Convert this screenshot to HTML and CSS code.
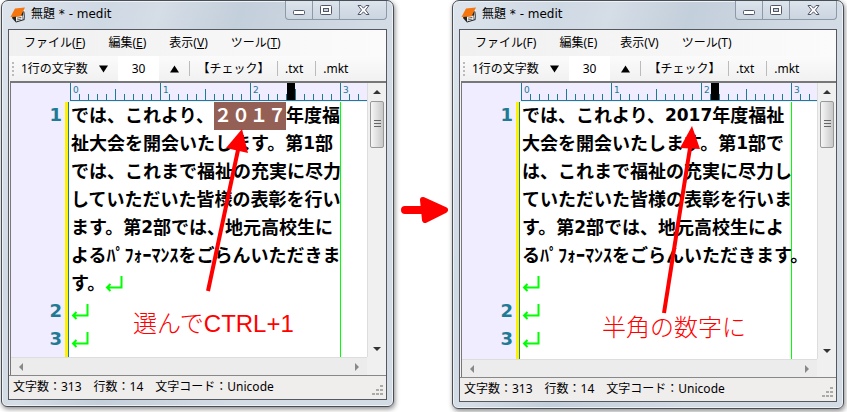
FILE: index.html
```html
<!DOCTYPE html>
<html lang="ja">
<head>
<meta charset="utf-8">
<title>medit</title>
<link rel="stylesheet" href="styles.css">
</head>
<body>
<svg class="defs" aria-hidden="true">
  <symbol id="book" viewBox="0 0 16 16">
    <path d="M5 3L15 4.500L14.500 13L6 15.500L2 11Z" fill="#222"/>
    <path d="M6 9.500L12.500 8.500L12.500 12.500L6 14.500Z" fill="#fff"/>
    <path d="M7 11.200L11.500 10.300M6.700 13L11.200 12" stroke="#444" stroke-width=".8"/>
    <path d="M5 1.500L15 0.500L10.500 9.500L0.500 10Z" fill="#f5760f"/>
    <path d="M14.500 3L13 12.500" stroke="#fff" stroke-width=".8"/>
  </symbol>
  <symbol id="ret" viewBox="0 0 18 17">
    <path d="M16.500 1V12.500H2M5.500 9L2 12.500L5.500 16" fill="none" stroke="#0f0" stroke-width="2"/>
  </symbol>
  <symbol id="min" viewBox="0 0 13 13"><rect x=".5" y="6.500" width="11" height="4" rx="1" fill="#fff" stroke="#535666"/></symbol>
  <symbol id="max" viewBox="0 0 13 13"><rect x=".5" y="1.500" width="11" height="9" rx="1" fill="#fff" stroke="#535666"/><rect x="3.500" y="4.500" width="5" height="3" fill="#ccd5e0" stroke="#535666"/></symbol>
  <symbol id="close" viewBox="0 0 13 13"><path d="M1 1.500H4L6.500 4.200L9 1.500H12L8.500 6L12 10.500H9L6.500 7.800L4 10.500H1L4.500 6Z" fill="#fff" stroke="#535666"/></symbol>
</svg>
<main class="scene">
  <section class="window">
    <header class="titlebar">
      <svg class="app-icon"><use href="#book"/></svg>
      <h1 class="title">無題 * - medit</h1>
      <div class="controls">
        <button aria-label="最小化"><svg><use href="#min"/></svg></button>
        <button aria-label="最大化"><svg><use href="#max"/></svg></button>
        <button class="wide" aria-label="閉じる"><svg><use href="#close"/></svg></button>
      </div>
    </header>
    <div class="client">
      <nav class="menu">
        <button>ファイル(<u>F</u>)</button>
        <button>編集(<u>E</u>)</button>
        <button>表示(<u>V</u>)</button>
        <button>ツール(<u>T</u>)</button>
      </nav>
      <div class="toolbar">
        <span class="grip"></span>
        <label class="count-label" for="count1">1行の文字数</label>
        <button class="step" aria-label="減らす"><svg viewBox="0 0 10 8"><path d="M0 0H10L5 8Z"/></svg></button>
        <input class="count" id="count1" value="30">
        <button class="step" aria-label="増やす"><svg viewBox="0 0 10 8"><path d="M0 8H10L5 0Z"/></svg></button>
        <button class="tool check">【チェック】</button>
        <button class="tool">.txt</button>
        <button class="tool">.mkt</button>
      </div>
      <div class="editor">
        <div class="ruler"><div class="scale"><span>0</span><span>1</span><span>2</span><span>3</span><i class="caret"></i></div></div>
        <div class="doc">
          <div class="para"><b class="num">1</b><div class="lines">
            <p>では、これより、<mark>２０１７</mark>年度福</p>
            <p>祉大会を開会いたします。第<span class="d">1</span>部</p>
            <p>では、これまで福祉の充実に尽力</p>
            <p>していただいた皆様の表彰を行い</p>
            <p>ます。第<span class="d">2</span>部では、地元高校生に</p>
            <p>よるﾊﾟﾌｫｰﾏﾝｽをごらんいただきま</p>
            <p>す。<svg class="ret"><use href="#ret"/></svg></p>
          </div></div>
          <div class="para"><b class="num">2</b><div class="lines"><p><svg class="ret"><use href="#ret"/></svg></p></div></div>
          <div class="para"><b class="num">3</b><div class="lines"><p><svg class="ret"><use href="#ret"/></svg></p></div></div>
          <svg class="pointer" viewBox="0 0 300 256"><path d="M139 189L169 48" stroke="#f00" stroke-width="4"/><path d="M173 27L157 46L179 51Z" fill="#f00"/></svg>
          <p class="note note-left">選んでCTRL+1</p>
        </div>
        <div class="vscroll"><i class="up"></i><i class="thumb"></i><i class="down"></i></div>
        <div class="hscroll"><i class="left"></i><i class="right"></i></div>
      </div>
      <footer class="status"><span>文字数：313</span><span>行数：14</span><span>文字コード：Unicode</span>
        <svg class="size-grip" viewBox="0 0 11 11"><path d="M8 0h3v2H8zM4 4h3v2H4zM8 4h3v2H8zM0 8h3v2H0zM4 8h3v2H4zM8 8h3v2H8z"/></svg>
      </footer>
    </div>
  </section>

  <svg class="between" viewBox="0 0 58 26"><path d="M11 13H28" stroke="#f00" stroke-width="8" stroke-linecap="round"/><path d="M29 3L51 13L31 23Z" fill="#f00" stroke="#f00" stroke-width="6" stroke-linejoin="round"/></svg>

  <section class="window second">
    <header class="titlebar">
      <svg class="app-icon"><use href="#book"/></svg>
      <h1 class="title">無題 * - medit</h1>
      <div class="controls">
        <button aria-label="最小化"><svg><use href="#min"/></svg></button>
        <button aria-label="最大化"><svg><use href="#max"/></svg></button>
        <button class="wide" aria-label="閉じる"><svg><use href="#close"/></svg></button>
      </div>
    </header>
    <div class="client">
      <nav class="menu">
        <button>ファイル(F)</button>
        <button>編集(E)</button>
        <button>表示(V)</button>
        <button>ツール(T)</button>
      </nav>
      <div class="toolbar">
        <span class="grip"></span>
        <label class="count-label" for="count2">1行の文字数</label>
        <button class="step" aria-label="減らす"><svg viewBox="0 0 10 8"><path d="M0 0H10L5 8Z"/></svg></button>
        <input class="count" id="count2" value="30">
        <button class="step" aria-label="増やす"><svg viewBox="0 0 10 8"><path d="M0 8H10L5 0Z"/></svg></button>
        <button class="tool check">【チェック】</button>
        <button class="tool">.txt</button>
        <button class="tool">.mkt</button>
      </div>
      <div class="editor">
        <div class="ruler"><div class="scale"><span>0</span><span>1</span><span>2</span><span>3</span><i class="caret"></i></div></div>
        <div class="doc">
          <div class="para"><b class="num">1</b><div class="lines">
            <p>では、これより、<span class="d">2017</span>年度福祉</p>
            <p>大会を開会いたします。第<span class="d">1</span>部で</p>
            <p>は、これまで福祉の充実に尽力し</p>
            <p>ていただいた皆様の表彰を行いま</p>
            <p>す。第<span class="d">2</span>部では、地元高校生によ</p>
            <p>るﾊﾟﾌｫｰﾏﾝｽをごらんいただきます。</p>
            <p><svg class="ret"><use href="#ret"/></svg></p>
          </div></div>
          <div class="para"><b class="num">2</b><div class="lines"><p><svg class="ret"><use href="#ret"/></svg></p></div></div>
          <div class="para"><b class="num">3</b><div class="lines"><p><svg class="ret"><use href="#ret"/></svg></p></div></div>
          <div class="para"><div class="num"></div><div class="lines"><p><svg class="ret"><use href="#ret"/></svg></p></div></div>
          <svg class="pointer" viewBox="0 0 300 256"><path d="M144 211L170 46" stroke="#f00" stroke-width="4"/><path d="M172 24L160 46L180 47Z" fill="#f00"/></svg>
          <p class="note note-right">半角の数字に</p>
        </div>
        <div class="vscroll"><i class="up"></i><i class="thumb"></i><i class="down"></i></div>
        <div class="hscroll"><i class="left"></i><i class="right"></i></div>
      </div>
      <footer class="status"><span>文字数：313</span><span>行数：14</span><span>文字コード：Unicode</span>
        <svg class="size-grip" viewBox="0 0 11 11"><path d="M8 0h3v2H8zM4 4h3v2H4zM8 4h3v2H8zM0 8h3v2H0zM4 8h3v2H4zM8 8h3v2H8z"/></svg>
      </footer>
    </div>
  </section>
</main>
</body>
</html>
```
FILE: styles.css
```css
* { box-sizing: border-box; margin: 0; padding: 0; }
:root { --teal: #1f7a93; --gutter: #efedff; }
body { background: #fff; color: #000; font: 12px/18px "Noto Sans", "Noto Sans CJK JP", sans-serif; overflow: hidden; }
button, input { font: inherit; color: inherit; border: 0; background: none; }
svg { display: block; }
.defs { position: absolute; width: 0; height: 0; }

.scene { display: grid; grid-template: minmax(0, 1fr) / 393fr 58px 392fr; height: 100vh; padding: 0 3px 3px 1px; }
.between { align-self: center; width: 58px; height: 26px; margin-top: 10px; }
.window {
  display: flex; flex-direction: column; min-width: 0; margin-bottom: 2px; padding: 0 6px 6px;
  border: 1px solid #4a4e55; border-radius: 7px 7px 6px 6px;
  background: linear-gradient(110deg, #dde4ec 0, #cfd9e4 20%, #d5dde6 30%, #c3cfdb 45%, #d3dbe5 70%);
  box-shadow: inset 0 0 0 1px #edf2f7, 1px 2px 5px #888;
}
.second { margin-bottom: 0; }
.titlebar { flex: none; display: flex; height: 28px; padding-left: 2px; }
.app-icon { width: 16px; height: 16px; margin-top: 6px; }
.title { flex: 1; margin: 4px 0 0 5px; font: 12px/18px "DejaVu Sans", "Noto Sans CJK JP", sans-serif; }
.controls { display: flex; height: 19px; border: 1px solid #8d98a8; border-top: 0; border-radius: 0 0 4px 4px; background: linear-gradient(#dce4ec, #cbd5e0); }
.controls button { display: grid; place-items: center; width: 27px; padding-top: 1px; border-right: 1px solid #8d98a8; }
.controls .wide { width: 46px; border: 0; }
.controls svg { width: 13px; height: 13px; }

.client { flex: 1; min-height: 0; display: flex; flex-direction: column; border: 1px solid #55595f; background: #f4f4f4; }
.menu { flex: none; display: flex; gap: 23px; height: 26px; padding: 0 15px; background: linear-gradient(90deg, #f0f0f0, #fbfbfb); }
.menu button { white-space: nowrap; }
.toolbar { flex: none; display: flex; align-items: center; height: 25px; background: linear-gradient(#fbfbfb, #f1f1f1); white-space: nowrap; }
.grip { width: 2px; height: 14px; margin: 0 7px 0 3px; background: repeating-linear-gradient(#bbb 0 2px, transparent 2px 4px); }
.step { width: 30px; height: 25px; display: grid; place-items: center; }
.step svg { width: 9px; height: 8px; }
.count-label { width: 67px; }
.count { width: 41px; height: 25px; background: #fff; text-align: center; }
.tool { height: 15px; line-height: 15px; padding: 0 12px 0 7px; border-left: 1px solid #bbb; }
.check { width: 88px; padding: 0; text-align: center; }

.editor { flex: 1; min-height: 0; display: grid; grid-template: 19px minmax(0, 1fr) 18px / 1fr 19px; margin-left: 1px; border-top: 2px solid #777; border-left: 1px solid #777; background: #f0f0f0; }
.ruler { background: var(--gutter); padding-left: 59px; overflow: hidden; }
.scale {
  position: relative; display: flex; height: 18px; border-bottom: 1px solid var(--teal);
  background:
    repeating-linear-gradient(90deg, var(--teal) 0 1px, transparent 1px 9px) 0 100% / 100% 6px no-repeat,
    repeating-linear-gradient(90deg, transparent 0 45px, var(--teal) 45px 46px, transparent 46px 90px) 0 100% / 100% 11px no-repeat,
    repeating-linear-gradient(90deg, var(--teal) 0 1px, transparent 1px 90px);
}
.scale span { flex: 0 0 90px; padding-left: 3px; font: 9px/15px "DejaVu Sans", sans-serif; color: var(--teal); }
.caret { position: absolute; left: 217px; top: 0; width: 8px; height: 17px; background: #000; }
.second .caret { left: 190px; }
.doc {
  position: relative; grid-row: 2; overflow: hidden; min-height: 0;
  background:
    linear-gradient(#0f0, #0f0) 329px 0 / 1px 100% no-repeat,
    linear-gradient(90deg, var(--gutter) 54px, #fff200 54px 57px, var(--teal) 57px 58px, #fff 58px);
}
.para { display: flex; }
.num { width: 51px; margin-right: 9px; text-align: right; font: bold 18px/26px "DejaVu Sans", sans-serif; color: var(--teal); }
.lines p { display: flex; height: 28px; font: bold 18px/24px "Noto Sans CJK JP", sans-serif; white-space: nowrap; }
.lines mark { background: #945f54; color: #fff; height: 28px; }
.d { font: bold 17px/26px "DejaVu Sans", sans-serif; }
.ret { width: 18px; height: 17px; margin-top: 5px; }
.pointer { position: absolute; left: 58px; top: 0; width: 300px; height: 256px; fill: none; }
.note { position: absolute; color: #f00; font: 300 24px/34px "Liberation Sans", "Noto Sans CJK JP", sans-serif; white-space: nowrap; }
.note-left { left: 122px; top: 205px; }
.note-right { left: 140px; top: 209px; }

.vscroll { grid-area: 1 / 2 / 3 / 3; display: flex; flex-direction: column; align-items: center; border-left: 1px solid #ddd; }
.thumb { display: grid; width: 14px; height: 47px; border: 1px solid #999; border-radius: 2px; background: repeating-linear-gradient(#666 0 1px, transparent 1px 3px) 50% 50% / 7px 9px no-repeat, linear-gradient(90deg, #f6f6f6, #c8c8c8); }
.up, .down { width: 0; height: 0; border: 4px solid transparent; }
.up { margin: 3px 0 7px; border-bottom-color: #333; }
.down { margin-top: auto; margin-bottom: 2px; border-top-color: #333; }
.hscroll { grid-area: 3 / 1 / 4 / 2; display: flex; justify-content: space-between; align-items: center; padding: 0 4px; background: #ececec; border-top: 1px solid #ddd; }
.left, .right { width: 0; height: 0; border: 4px solid transparent; }
.left { border-right-color: #888; }
.right { border-left-color: #888; }
.status { flex: none; display: flex; gap: 12px; height: 24px; padding: 2px 3px 0 4px; border-top: 1px solid #888; background: #f0eded; white-space: nowrap; }
.size-grip { width: 11px; height: 11px; margin: 7px 0 0 auto; fill: #aaa; }
```
